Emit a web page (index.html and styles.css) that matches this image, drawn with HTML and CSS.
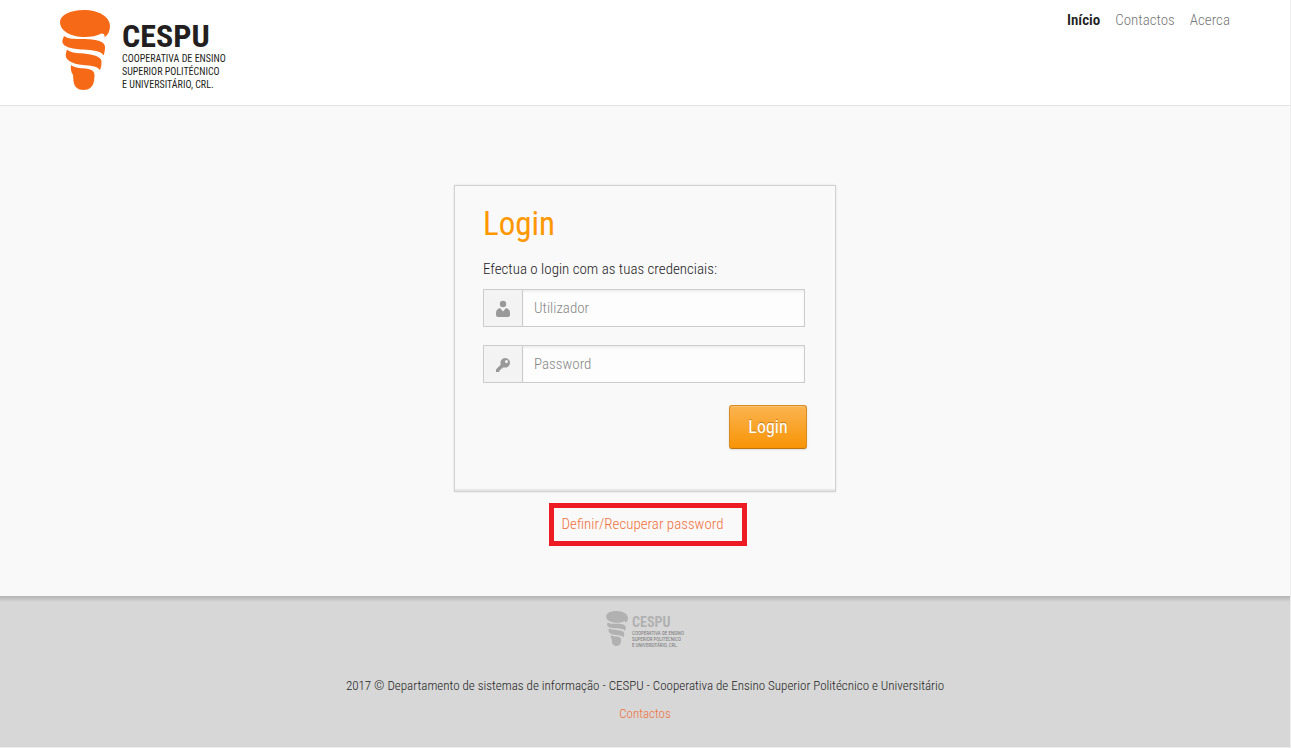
FILE: index.html
```html
<!DOCTYPE html>
<html lang="pt">
<head>
  <meta charset="UTF-8">
  <meta name="viewport" content="width=device-width, initial-scale=1.0">
  <title>CESPU - Login</title>
  <link rel="stylesheet" href="styles.css">
</head>
<body>
<div class="page">
  <!-- Header -->
  <header class="header">
    <a class="logo" href="#" aria-label="CESPU">
      <svg class="logo-mark" viewBox="0 0 50 80" aria-hidden="true">
        <path d="M24 0C39 0 50 7 50 16C50 21 48 25 44.500 27.500C45 25 44 23.500 41.500 23.500C37 26 31 27 25 27C11 27 0 21 0 12C0 5 10 0 24 0Z"/>
        <path d="M4 26C8 29 14 29 22 29C32 29 45 30 45 37C45 40 44.500 43 43.500 45.500C42 41 32 40 23 39.500C12 39 1 37 2.500 30Z"/>
        <path d="M7 39.500C11 43 17 43 24 43.500C33 44.500 42 46.500 41.500 52C41.500 55 41 58 40 60C37 56 30 55.500 23 55C12 54 4 50 6 43Z"/>
        <path d="M11 55C15 58 20 58 25 58.500C31 59 35 61 34.500 66L34 71C33 77 29 80 23.500 80C18 80 14 77 13.500 71L13 65C11 62 10.500 59 11 55Z"/>
      </svg>
      <span class="logo-text">
        <strong>CESPU</strong>
        <span>COOPERATIVA DE ENSINO</span>
        <span>SUPERIOR POLITÉCNICO</span>
        <span>E UNIVERSITÁRIO, CRL.</span>
      </span>
    </a>
    <nav class="nav">
      <a class="active" href="#">Início</a>
      <a href="#">Contactos</a>
      <a href="#">Acerca</a>
    </nav>
  </header>

  <!-- Login -->
  <main class="main">
    <form class="login-box">
      <h1>Login</h1>
      <p>Efectua o login com as tuas credenciais:</p>
      <div class="field">
        <label for="username" aria-label="Utilizador">
          <svg width="16" height="18" viewBox="0 0 16 18" aria-hidden="true">
            <circle cx="8" cy="4" r="3.200"/>
            <path d="M5 8L8 11.500L11 8C13.500 8.500 15 10.500 15 13V15Q15 17 13 17H3Q1 17 1 15V13C1 10.500 2.500 8.500 5 8Z"/>
          </svg>
        </label>
        <input type="text" id="username" placeholder="Utilizador">
      </div>
      <div class="field">
        <label for="password" aria-label="Password">
          <svg width="16" height="18" viewBox="0 0 16 18" aria-hidden="true">
            <path fill-rule="evenodd" d="M10.200 2A4.800 4.800 0 1 1 8.600 11.300L7.500 12.400H6V14H4.500V15.500L4 16H1V13.500L5.800 8.500A4.800 4.800 0 0 1 10.200 2ZM11.500 4A1.500 1.500 0 1 0 11.500 7A1.500 1.500 0 1 0 11.500 4Z"/>
          </svg>
        </label>
        <input type="password" id="password" placeholder="Password">
      </div>
      <div class="actions">
        <button class="btn" type="submit">Login</button>
      </div>
    </form>
    <a class="recover" href="#">Definir/Recuperar password</a>
  </main>

  <!-- Footer -->
  <footer class="footer">
    <div class="logo logo-small">
      <svg class="logo-mark" viewBox="0 0 50 80" aria-hidden="true">
        <path d="M24 0C39 0 50 7 50 16C50 21 48 25 44.500 27.500C45 25 44 23.500 41.500 23.500C37 26 31 27 25 27C11 27 0 21 0 12C0 5 10 0 24 0Z"/>
        <path d="M4 26C8 29 14 29 22 29C32 29 45 30 45 37C45 40 44.500 43 43.500 45.500C42 41 32 40 23 39.500C12 39 1 37 2.500 30Z"/>
        <path d="M7 39.500C11 43 17 43 24 43.500C33 44.500 42 46.500 41.500 52C41.500 55 41 58 40 60C37 56 30 55.500 23 55C12 54 4 50 6 43Z"/>
        <path d="M11 55C15 58 20 58 25 58.500C31 59 35 61 34.500 66L34 71C33 77 29 80 23.500 80C18 80 14 77 13.500 71L13 65C11 62 10.500 59 11 55Z"/>
      </svg>
      <span class="logo-text">
        <strong>CESPU</strong>
        <span>COOPERATIVA DE ENSINO</span>
        <span>SUPERIOR POLITÉCNICO</span>
        <span>E UNIVERSITÁRIO, CRL.</span>
      </span>
    </div>
    <p>2017 © Departamento de sistemas de informação - CESPU - Cooperativa de Ensino Superior Politécnico e Universitário</p>
    <a href="#">Contactos</a>
  </footer>
</div>
</body>
</html>
```
FILE: styles.css
```css
* {
  box-sizing: border-box;
}
body {
  margin: 0;
  background: #ededed;
  font-family: "Roboto Condensed", Roboto, "Liberation Sans", sans-serif;
  font-size: 15px;
  font-weight: 300;
  line-height: 20px;
  color: #222;
}
a {
  color: #f2703a;
  text-decoration: none;
}
.page {
  display: flex;
  flex-direction: column;
  min-height: 100vh;
  border-right: 1px solid #ededed;
  border-bottom: 1px solid #ededed;
  background: #f9f9f9;
}
.header {
  display: flex;
  justify-content: space-between;
  align-items: flex-start;
  padding: 10px 60px 15px;
  background: #fff;
  border-bottom: 1px solid #e2e2e2;
}
.logo {
  display: flex;
  gap: 12px;
  color: #231f20;
}
.logo-mark {
  width: 50px;
  height: 80px;
  fill: #f66a17;
}
.logo-text {
  display: flex;
  flex-direction: column;
  padding-top: 10px;
  font-size: 10px;
  font-weight: 400;
  line-height: 13px;
  white-space: nowrap;
}
.logo-text strong {
  font-size: 32px;
  font-weight: 700;
  line-height: 32px;
}
.header .logo {
  height: 80px;
}
.nav {
  display: flex;
  gap: 15px;
}
.nav a {
  color: #777;
}
.nav .active {
  color: #222;
  font-weight: 600;
}
.main {
  flex: 1;
  display: flex;
  flex-direction: column;
  align-items: center;
  padding: 79px 20px 50px;
}
.login-box {
  width: 382px;
  padding: 19px 28px 42px;
  border: 1px solid #d2d2d2;
  box-shadow: inset 0 -2px 0 #e6e6e6, 0 0 2px #ddd;
}
.login-box h1 {
  margin: 0 0 16px;
  font-size: 33px;
  font-weight: 400;
  line-height: 38px;
  color: #ff9800;
}
.login-box p {
  margin: 0 0 10px;
}
.field {
  display: flex;
  height: 38px;
  margin: 0 2px 18px 0;
  border: 1px solid #ccc;
}
.field label {
  display: flex;
  align-items: center;
  justify-content: center;
  width: 39px;
  padding-top: 2px;
  background: #f3f3f3;
  border-right: 1px solid #ccc;
}
.field svg {
  fill: #999;
}
.field input {
  flex: 1;
  min-width: 0;
  padding: 0 11px;
  border: 0;
  background: #fdfdfd;
  box-shadow: inset 0 2px 2px #f0f0f0;
  font: inherit;
  color: #555;
}
.field input::placeholder {
  color: #888;
  opacity: 1;
}
.actions {
  display: flex;
  justify-content: flex-end;
  padding-top: 4px;
}
.btn {
  width: 78px;
  height: 44px;
  padding: 0;
  border: 1px solid #d98a1e;
  border-bottom-color: #bd7310;
  border-radius: 3px;
  background: linear-gradient(#fbb450, #f89406);
  box-shadow: inset 0 1px 0 #fcc473, 0 1px 2px #ddd;
  font: inherit;
  font-size: 18px;
  font-weight: 400;
  color: #fff;
  text-shadow: 0 -1px 0 #c47a18;
  cursor: pointer;
}
.recover {
  margin: 11px 0 0 6px;
  padding: 6px 19px 7px 8px;
  border: 5px solid #ed1c24;
}
.footer {
  display: flex;
  flex-direction: column;
  align-items: center;
  padding: 15px 20px 23px;
  background: linear-gradient(#b3b3b3, #d7d7d7 6px);
  font-size: 13px;
}
.footer p {
  margin: 30px 0 8px;
}
.logo-small {
  gap: 4px;
  color: #777;
}
.logo-small .logo-mark {
  width: 22px;
  height: 35px;
  fill: #b1b1b1;
}
.logo-small .logo-text {
  height: 35px;
  padding-top: 4px;
  font-size: 5px;
  line-height: 6px;
}
.logo-small strong {
  font-size: 14px;
  line-height: 15px;
  color: #b1b1b1;
}
```
